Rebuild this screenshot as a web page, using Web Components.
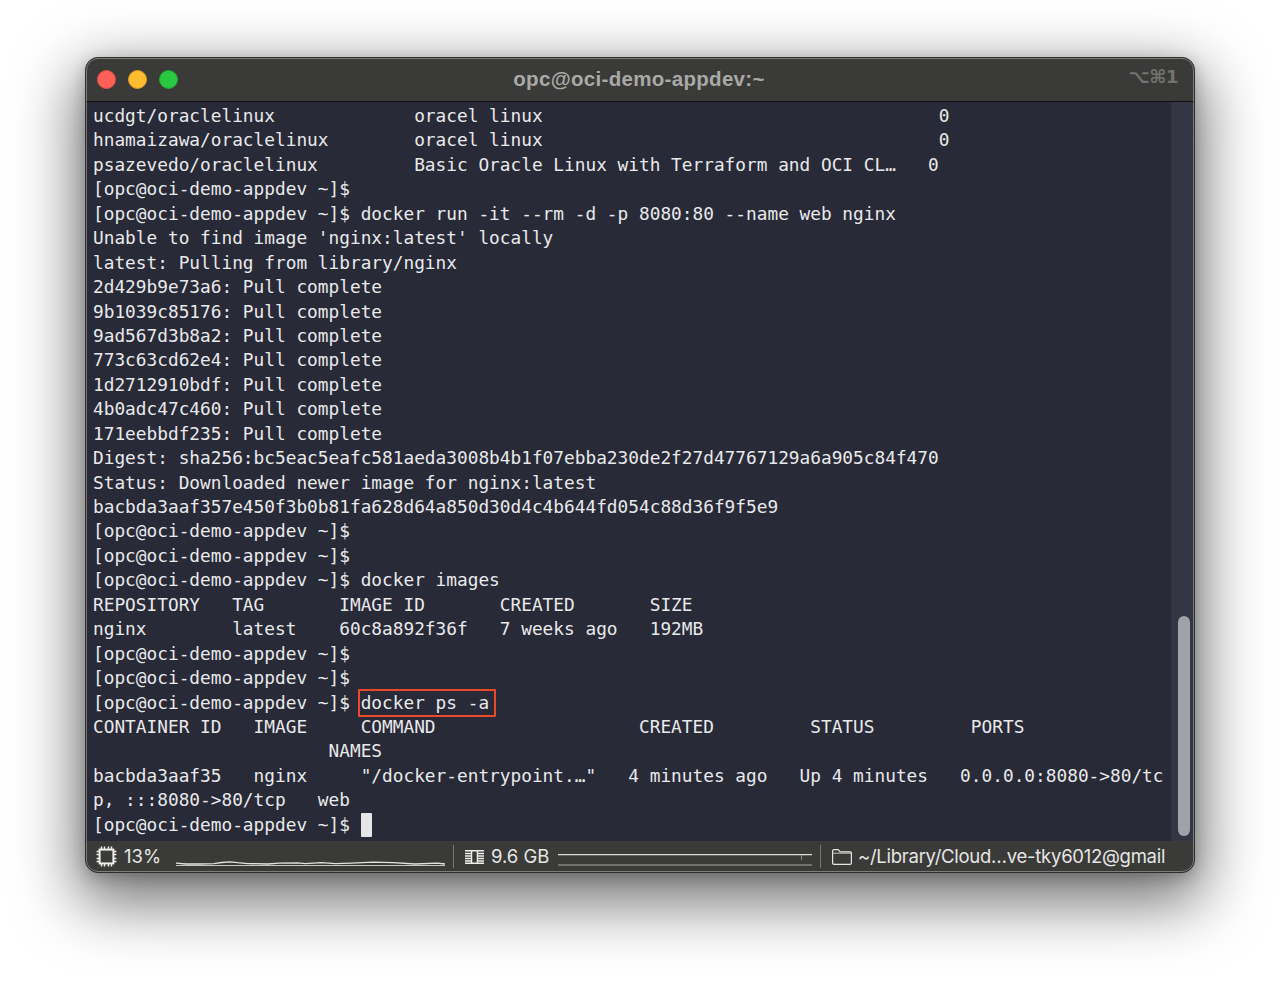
<!DOCTYPE html>
<html lang="en"><head><meta charset="utf-8"><title>Terminal</title>
<style>
html,body{margin:0;background:#fff}
body{width:1280px;height:986px;overflow:hidden;box-sizing:border-box;padding:57px 85px 0}
</style></head><body>
<term-window>
<term-titlebar slot="title" shortcut="⌥⌘1">opc@oci-demo-appdev:~</term-titlebar>
<term-line>ucdgt/oraclelinux             oracel linux                                     0</term-line>
<term-line>hnamaizawa/oraclelinux        oracel linux                                     0</term-line>
<term-line>psazevedo/oraclelinux         Basic Oracle Linux with Terraform and OCI CL…   0</term-line>
<term-line>[opc@oci-demo-appdev ~]$</term-line>
<term-line>[opc@oci-demo-appdev ~]$ docker run -it --rm -d -p 8080:80 --name web nginx</term-line>
<term-line>Unable to find image 'nginx:latest' locally</term-line>
<term-line>latest: Pulling from library/nginx</term-line>
<term-line>2d429b9e73a6: Pull complete</term-line>
<term-line>9b1039c85176: Pull complete</term-line>
<term-line>9ad567d3b8a2: Pull complete</term-line>
<term-line>773c63cd62e4: Pull complete</term-line>
<term-line>1d2712910bdf: Pull complete</term-line>
<term-line>4b0adc47c460: Pull complete</term-line>
<term-line>171eebbdf235: Pull complete</term-line>
<term-line>Digest: sha256:bc5eac5eafc581aeda3008b4b1f07ebba230de2f27d47767129a6a905c84f470</term-line>
<term-line>Status: Downloaded newer image for nginx:latest</term-line>
<term-line>bacbda3aaf357e450f3b0b81fa628d64a850d30d4c4b644fd054c88d36f9f5e9</term-line>
<term-line>[opc@oci-demo-appdev ~]$</term-line>
<term-line>[opc@oci-demo-appdev ~]$</term-line>
<term-line>[opc@oci-demo-appdev ~]$ docker images</term-line>
<term-line>REPOSITORY   TAG       IMAGE ID       CREATED       SIZE</term-line>
<term-line>nginx        latest    60c8a892f36f   7 weeks ago   192MB</term-line>
<term-line>[opc@oci-demo-appdev ~]$</term-line>
<term-line>[opc@oci-demo-appdev ~]$</term-line>
<term-line>[opc@oci-demo-appdev ~]$ <term-mark>docker ps -a</term-mark></term-line>
<term-line>CONTAINER ID   IMAGE     COMMAND                   CREATED         STATUS         PORTS</term-line>
<term-line>                      NAMES</term-line>
<term-line>bacbda3aaf35   nginx     "/docker-entrypoint.…"   4 minutes ago   Up 4 minutes   0.0.0.0:8080-&gt;80/tc</term-line>
<term-line>p, :::8080-&gt;80/tcp   web</term-line>
<term-line>[opc@oci-demo-appdev ~]$ <term-cursor></term-cursor></term-line>
<term-status slot="status">
  <status-item label="13%" label-width="52" gap="6" kind="cpu"></status-item>
  <status-graph kind="cpu"></status-graph>
  <status-sep></status-sep>
  <status-item label="9.6 GB" label-width="67" gap="7" kind="mem"></status-item>
  <status-graph kind="mem"></status-graph>
  <status-sep></status-sep>
  <status-item label="~/Library/Cloud…ve-tky6012@gmail" label-width="307" gap="6" track="-.27" kind="folder"></status-item>
</term-status>
</term-window>
<script>
const def=(name,css,html)=>{customElements.define(name,class extends HTMLElement{
  constructor(){super();const r=this.attachShadow({mode:'open'});this._r=r;r.innerHTML=`<style>${css}</style>`+(typeof html==='function'?'':html);}
  connectedCallback(){if(typeof html==='function'){this._r.innerHTML=`<style>${css}</style>`+html(this)}}
})};
const UI='"Inter","Liberation Sans",sans-serif';
def('term-window',`
:host{display:flex;flex-direction:column;width:1110px;height:816px;box-sizing:border-box;border-radius:13px;background:#3a3a38;position:relative;
 box-shadow:0 22px 62px 8px rgba(0,0,0,.55),0 4px 16px rgba(0,0,0,.22);overflow:hidden;border:1px solid #2e2e2d}
:host::after{content:"";position:absolute;inset:0;border:1px solid rgba(255,255,255,.34);border-radius:12px;pointer-events:none}
.body{flex:none;height:739px;display:flex;background:#282a37}
.out{flex:1;min-width:0;padding:2px 0 0 7px;box-sizing:border-box}
.track{flex:none;width:23px;background:#343644;box-sizing:border-box;padding:514px 4px 4px 6px;border-left:1px solid #30323f}
.thumb{width:12px;height:220px;border-radius:6px;background:#a0a1a9}
`,`<slot name="title"></slot><div class="body"><div class="out"><slot></slot></div><div class="track"><div class="thumb"></div></div></div><slot name="status"></slot>`);
def('term-titlebar',`
:host{display:flex;flex:none;height:44px;box-sizing:border-box;align-items:center;position:relative;background:#3a3a38;border-bottom:1.5px solid #111;font:700 20.5px/1 "Liberation Sans",Arial,sans-serif;color:#a9a9a7}
.lights{display:flex;gap:12px;padding-left:11px;flex:none}
.l{width:19px;height:19px;border-radius:50%;box-sizing:border-box}
.title{position:absolute;left:0;right:0;top:11px;text-align:center;padding-right:2px;letter-spacing:.31px}
.sc{position:absolute;right:16px;top:10px;color:#727270;font:700 18.5px/1 "DejaVu Sans",sans-serif;letter-spacing:-.6px}
`,h=>`<div class="lights"><div class="l" style="background:#fe5f57;border:1px solid #e5504a"></div><div class="l" style="background:#febc2e;border:1px solid #de9f20"></div><div class="l" style="background:#28c840;border:1px solid #1fab32"></div></div><div class="title"><slot></slot></div><div class="sc">${h.getAttribute('shortcut')}</div>`);
def('term-line',`:host{display:block;height:24.45px;white-space:pre;font:17.8px/24.45px "DejaVu Sans Mono","Liberation Mono",monospace;color:#e8e9eb}`,`<slot></slot>`);
def('term-mark',`:host{display:inline-block;position:relative}
.b{position:absolute;left:-3px;right:-7px;top:-2px;bottom:-2px;border:2.5px solid #ea4a2a;box-sizing:border-box;border-radius:1px}`,`<slot></slot><span class="b"></span>`);
def('term-cursor',`:host{display:inline-block;width:11px;height:24px;vertical-align:top;background:#e6e6e8;border-radius:1px}`,``);
def('term-status',`:host{display:flex;flex:none;align-items:center;height:31px;box-sizing:border-box;padding:0 0 0 11px;background:#3a3a38;font:400 18.5px/1 ${UI};color:#e6e6e4}`,`<slot></slot>`);
const icons={
cpu:`<svg width="21" height="21" viewBox="0 0 21 21" fill="none" stroke="#eeeeec" style="margin-left:-1px;margin-right:1px"><rect x="3.6" y="3.6" width="13.8" height="13.8" stroke-width="2"/><path stroke-width="1.5" d="M5.5 .6v2.4M8.5 .6v2.4M12.5 .6v2.4M15.5 .6v2.4M5.5 18v2.4M8.5 18v2.4M12.5 18v2.4M15.5 18v2.4M.6 5.5H3M.6 8.5H3M.6 12.5H3M.6 15.5H3M18 5.5h2.4M18 8.5h2.4M18 12.5h2.4M18 15.5h2.4"/></svg>`,
mem:`<svg width="19" height="14" viewBox="0 0 19 14" fill="none" stroke="#eeeeec"><path stroke-width="1.6" d="M0 .8h19M0 13.2h19"/><path stroke-width="1.3" d="M0 3.5h6M0 6h6M0 8.5h6M0 11h6M13 3.5h6M13 6h6M13 8.5h6M13 11h6M6.6 1v12M12.4 1v12"/></svg>`,
folder:`<svg width="20" height="16" viewBox="0 0 20 16" fill="none" stroke="#e6e6e4" stroke-width="1.2"><path d="M.6 14V2A1.4 1.4 0 0 1 2 .6h4.2l2 2.2H18A1.4 1.4 0 0 1 19.4 4.2V14A1.4 1.4 0 0 1 18 15.4H2A1.4 1.4 0 0 1 .6 14Z"/><path d="M.6 4.2h18.8" stroke-width=".8"/></svg>`};
def('status-item',`:host{display:flex;align-items:center;flex:none}
.t{white-space:nowrap;display:block}.i{display:flex;flex:none}`,h=>`<span class="i" style="margin-right:${h.getAttribute('gap')}px">${icons[h.getAttribute('kind')]}</span><span class="t" style="width:${h.getAttribute('label-width')}px;letter-spacing:${h.getAttribute('track')||0}px">${h.getAttribute('label')}</span>`);
def('status-sep',`:host{display:block;flex:none;width:1px;height:23px;background:#777775;margin:0 11px 0 8px}`,``);
const g={
cpu:`<svg width="269" height="15" viewBox="0 0 270 15" fill="none"><path stroke="#e2e2e0" stroke-width="1.3" d="M0 11.1 10 12 24 12 38 11.6 46 10.5 54 9.8 62 10.7 72 11.6 92 12 104 11.1 122 10.9 130 11.6 146 10.7 160 11.6 176 11.1 198 10.2 218 10.7 240 12 262 11.2 270 12"/><path stroke="#c4c4c2" stroke-width="1.1" d="M0 13.5H270"/></svg>`,
mem:`<svg width="254" height="15" viewBox="0 0 254 15" fill="none"><path stroke="#dcdcda" stroke-width="1.2" d="M0 2.6C80 2 160 1.8 254 2.6"/><path stroke="#8c8c8a" stroke-width="1" d="M243.5 3v5"/><path stroke="#a8a8a6" stroke-width="1.2" d="M0 13H254"/></svg>`};
def('status-graph',`:host{display:block;flex:none;height:15px;margin-top:5px}svg{display:block}`,h=>g[h.getAttribute('kind')]);
</script>
</body></html>
